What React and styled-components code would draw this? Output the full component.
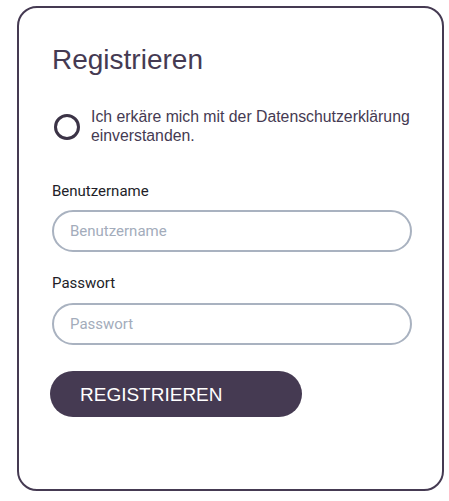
import React from 'react';
import styled, { createGlobalStyle } from 'styled-components';

const GlobalStyle = createGlobalStyle`
  body {
    margin: 0;
    background: #ffffff;
    font-family: "Liberation Sans", Arial, sans-serif;
  }
`;

const Card = styled.div`
  box-sizing: border-box;
  width: 427px;
  height: 485px;
  margin: 6px 0 0 17px;
  padding: 36px 31px 0 33px;
  border: 2px solid #453a52;
  border-radius: 20px;
  background: #fff;
  display: flex;
  flex-direction: column;
`;

const Title = styled.h1`
  margin: 0;
  font-family: "Liberation Sans", Arial, sans-serif;
  font-weight: 400;
  font-size: 28px;
  line-height: 32px;
  color: #453a52;
`;

const Consent = styled.label`
  display: flex;
  align-items: flex-start;
  gap: 11px;
  margin-top: 31px;
  padding-left: 2px;
  cursor: pointer;
`;

const Radio = styled.span`
  flex: none;
  box-sizing: border-box;
  width: 26px;
  height: 26px;
  margin-top: 7px;
  border: 3px solid #3b3346;
  border-radius: 50%;
`;

const ConsentText = styled.span`
  font-size: 15.8px;
  line-height: 19px;
  color: #453a52;
`;

const Field = styled.div`
  display: flex;
  flex-direction: column;
  gap: ${({ $gap }) => $gap}px;
  margin-top: ${({ $top }) => $top}px;
`;

const Label = styled.div`
  font-family: Roboto, "Noto Sans", sans-serif;
  font-size: 15px;
  line-height: 18px;
  color: #221e28;
`;

const Input = styled.input`
  box-sizing: border-box;
  width: 360px;
  height: 42px;
  padding: 0 16px;
  border: 2px solid #a9b2c0;
  border-radius: 21px;
  font-family: Roboto, "Noto Sans", sans-serif;
  font-size: 15px;
  color: #2c2733;
  outline: none;
  &::placeholder {
    color: #a3acbb;
  }
`;

const Button = styled.button`
  align-self: flex-start;
  box-sizing: border-box;
  width: 252px;
  height: 46px;
  margin: 26px 0 0 -2px;
  padding: 2px 0 0 30px;
  border: none;
  border-radius: 23px;
  background: #453a52;
  color: #fff;
  text-align: left;
  font-family: "Liberation Sans", Arial, sans-serif;
  font-size: 19px;
  cursor: pointer;
`;

export default function App() {
  return (
    <>
      <GlobalStyle />
      <Card>
        <Title>Registrieren</Title>
        <Consent>
          <Radio />
          <ConsentText>
            Ich erkäre mich mit der Datenschutzerklärung
            <br />
            einverstanden.
          </ConsentText>
        </Consent>
        <Field $top={37} $gap={10}>
          <Label>Benutzername</Label>
          <Input placeholder="Benutzername" />
        </Field>
        <Field $top={22} $gap={11}>
          <Label>Passwort</Label>
          <Input type="password" placeholder="Passwort" />
        </Field>
        <Button>REGISTRIEREN</Button>
      </Card>
    </>
  );
}
